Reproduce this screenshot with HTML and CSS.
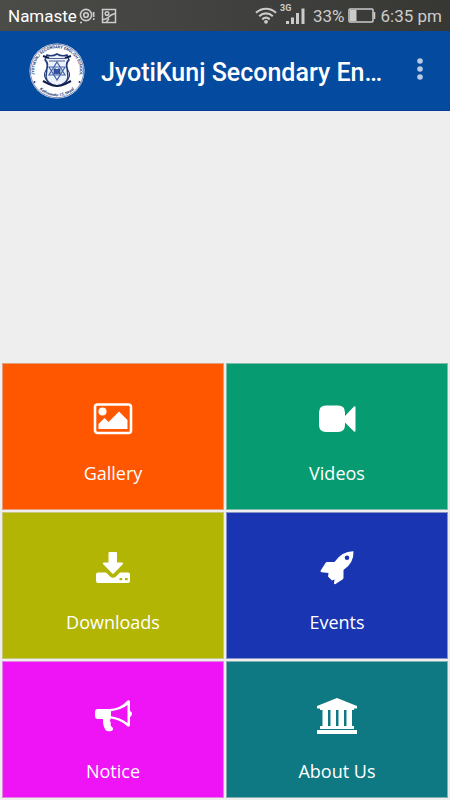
FILE: index.html
```html
<!DOCTYPE html>
<html lang="en">
<head>
<meta charset="utf-8">
<meta name="viewport" content="width=device-width, initial-scale=1">
<title>JyotiKunj Secondary English School</title>
<link rel="stylesheet" href="styles.css">
</head>
<body>
<div class="status">
  <div class="status-group left">
    <span>Namaste</span>
    <svg width="16" height="16" viewBox="0 0 16 16" fill="none" stroke="#ccc" stroke-width="1.6"><circle cx="7" cy="7" r="5.6"/><circle cx="7" cy="7" r="2.3"/><path d="M1 14.5h2M14.7 4v5M14.7 10.2v1.8"/></svg>
    <svg class="shot" width="16" height="16" viewBox="0 0 16 16" fill="none" stroke="#ccc" stroke-width="1.5"><rect x="1.5" y="1.5" width="13" height="13"/><circle cx="6" cy="5.5" r="1.8"/><path d="M2 11.500c3 0 4-1 5-2s3-3 7-4M5.500 14l2.500-3.500"/></svg>
  </div>
  <div class="status-group">
    <svg width="22" height="17" viewBox="0 0 22 17" fill="none" stroke="#ccc" stroke-width="2.2"><path d="M1 5.8c6-5.4 14-5.4 20 0M4.2 9.2c4-3.7 9.600-3.7 13.600 0M7.300 12.400c2.200-2 5.200-2 7.400 0"/><circle cx="11" cy="14.800" r="1.900" fill="#ccc" stroke="none"/></svg>
    <svg class="signal" width="26" height="21" viewBox="0 0 26 21" fill="#ccc"><text class="network" x="0" y="8">3G</text><path d="M6 18h3v3H6zM11 14.500h3V21h-3zM16 10h3v11h-3zM21.500 5.500h3V21h-3z"/></svg>
    <span class="dim percent">33%</span>
    <svg width="28" height="15" viewBox="0 0 28 15" fill="none" stroke="#ccc" stroke-width="1.500"><rect x="1" y="1" width="24" height="13" rx="1"/><path d="M2 2h6.500v11H2z" fill="#ccc" stroke="none"/><path d="M26.500 4v7"/></svg>
    <span class="dim clock">6:35 pm</span>
  </div>
</div>
<header class="bar">
  <svg class="logo" viewBox="0 0 56 56" role="img" aria-label="School emblem">
    <defs><path id="ring-top" d="M7.500 38A22.800 22.800 0 1 1 48.500 38"/><path id="ring-bottom" d="M7 42A25.200 25.200 0 0 0 49 42"/></defs>
    <circle cx="28" cy="28" r="27.500" fill="#fff"/>
    <circle cx="28" cy="28" r="26.700" fill="none" stroke="#20397a" stroke-width=".6"/>
    <text class="ring"><textPath href="#ring-top" startOffset="50%" text-anchor="middle">JYOTIKUNJ SECONDARY ENGLISH SCHOOL</textPath></text>
    <text class="ring script"><textPath href="#ring-bottom" startOffset="50%" text-anchor="middle">Kathmandu-15, Nepal</textPath></text>
    <g fill="none" stroke="#233a78">
      <path d="M18 12q5 2 10-1 5 3 10 1l2 5q-3 3-2 8l1 9q-1 7-11 9-10-2-11-9l1-9q1-5-2-8z" fill="#edf2fb" stroke-width="1.500"/>
      <path d="M20 15.500h16M20 18h16" stroke-width=".8"/>
      <path d="M16 16q5 5 1 11t2 12M40 16q-5 5-1 11t-2 12" stroke-width="1"/>
      <path d="M28 19l8 13H20zM28 37l-8-13h16z" stroke="#4263ad" stroke-width="1.200"/>
      <path d="M14 13l6 2M42 13l-6 2M14 38l6 3q8 4 16 0l6-3" stroke="#111e4b" stroke-width="2"/>
      <path d="M25 26q2-1 3 1 1-2 3-1v5q-2-1-3 0-1-1-3 0z" fill="#3152a4" stroke-width=".7"/>
    </g>
    <circle cx="5.500" cy="39" r="1" fill="#20397a"/><circle cx="50.500" cy="39" r="1" fill="#20397a"/>
  </svg>
  <h1 class="title">JyotiKunj Secondary English School</h1>
  <button class="more" type="button" aria-label="More options"><svg width="6" height="22" viewBox="0 0 6 22" fill="#b9cbe3"><circle cx="3" cy="3" r="2.800"/><circle cx="3" cy="11" r="2.800"/><circle cx="3" cy="19" r="2.800"/></svg></button>
</header>
<div class="banner"></div>
<nav class="tiles">
  <a class="tile gallery" href="#gallery">
    <svg class="icon" viewBox="0 0 40 40"><rect x="2" y="5.500" width="36" height="28.500" rx="2.500" fill="none" stroke="#fff" stroke-width="2.600"/><circle cx="9.500" cy="12.500" r="4" fill="#fff"/><path d="M5.500 30v-5l6-6 4 4L26 12.500l8.500 8.500v9z" fill="#fff"/></svg>
    <span>Gallery</span>
  </a>
  <a class="tile videos" href="#videos">
    <svg class="icon" viewBox="0 0 40 40" fill="#fff"><path d="M9 6.500h12q7 0 7 7v3.500L37 7.500q1.500-1 1.500 1v23q0 2-1.500 1L28 23.500V26q0 7-7 7H9q-7 0-7-7V13.500q0-7 7-7z"/></svg>
    <span>Videos</span>
  </a>
  <a class="tile downloads" href="#downloads">
    <svg class="icon" viewBox="0 0 40 40" fill="#fff"><path d="M16.500 4h6.500q1 0 1 1v9.500h5q2 0 .7 1.800l-8.700 9q-1 1-2 0l-8.700-9Q9 14.500 11 14.500h4.500V5q0-1 1-1z"/><path fill-rule="evenodd" d="M5 24.500h8l4 4q3 2.500 6 0l4-4h8q2 0 2 2V33q0 2-2 2H5q-2 0-2-2v-6.500q0-2 2-2zM26.500 30v2.200h2.700V30zM32 30v2.200h2.700V30z"/></svg>
    <span>Downloads</span>
  </a>
  <a class="tile events" href="#events">
    <svg class="icon" viewBox="0 0 40 40" fill="#fff"><path fill-rule="evenodd" d="M36.500 3.200Q25 3 17.500 14H10q-1 0-1.500 1L3.700 22.500q-.7 1.500 1 1.700l6.800.8-.5 3.500 4 4 2.500-1-.5 4q.4 1 1.500.5l7-4.500q1-.6 1-2v-7.500Q37 15 36.500 3.200zM30 7.500a2.300 2.300 0 1 1 0 4.600 2.300 2.300 0 0 1 0-4.600z"/></svg>
    <span>Events</span>
  </a>
  <a class="tile notice" href="#notice">
    <svg class="icon" viewBox="0 0 40 40" fill="#fff"><path fill-rule="evenodd" d="M5 12h12Q28 11 34 4q2-1.500 3 .5V14q2 .5 2 2.800T37 20v8.500q-1 2-3 .5-6-6-16-7.500-2 2 0 4.500-1.500 2 1.500 4.500 1.500 2-1 3.500-4 1-6-1-3-5-2.500-11H5q-3 0-3-3v-4q0-3 3-3zM34.500 8Q28 13 18 14.200v5Q27 20.500 34.500 26z"/></svg>
    <span>Notice</span>
  </a>
  <a class="tile about" href="#about">
    <svg class="icon" viewBox="0 0 40 40" fill="#fff"><path d="M20 1l20 8v2.500h-3V13H3v-1.500H0V9zM5.500 13H11v16H5.500zM13.500 13H19v16h-5.500zM21.500 13H27v16h-5.500zM29.500 13H35v16h-5.500zM3 29h34v3H3zM0 33h40v4H0z"/></svg>
    <span>About Us</span>
  </a>
</nav>
</body>
</html>
```

FILE: styles.css
```css
* { box-sizing: border-box; }
body {
  margin: 0;
  min-height: 100vh;
  display: flex;
  flex-direction: column;
  background: #eee;
  font-family: "Open Sans", "Noto Sans", sans-serif;
}
.status {
  height: 31px;
  padding: 0 8px;
  display: flex;
  align-items: center;
  justify-content: space-between;
  background: linear-gradient(90deg, #4b4c48, #41423f 50%, #373734);
  color: #fff;
  font: 17px/24px Roboto, sans-serif;
}
.status-group { display: flex; align-items: center; gap: 3px; }
.left { gap: 2px; }
.shot { margin-left: 4px; }
.signal { margin-bottom: 4px; }
.network { font: bold 9px Roboto, sans-serif; }
.dim { color: #ccc; }
.percent { margin-left: 4px; }
.clock { margin-left: 2px; }
.bar {
  height: 80px;
  padding: 0 8px 0 29px;
  display: flex;
  align-items: center;
  background: #044a9f;
  border-bottom: 1px solid #0a3c98;
}
.logo { width: 56px; height: 56px; flex: none; }
.ring { font: bold 4px Roboto, sans-serif; fill: #20397a; }
.script { font-style: italic; }
.title {
  flex: 1;
  min-width: 0;
  margin: 0 12px 0 16px;
  padding-top: 4px;
  overflow: hidden;
  white-space: nowrap;
  text-overflow: ellipsis;
  color: #fff;
  font: 500 25px/32px Roboto, sans-serif;
}
.more {
  width: 44px;
  height: 48px;
  padding: 0 0 4px;
  border: 0;
  background: none;
  display: flex;
  align-items: center;
  justify-content: center;
}
.banner { height: 252px; }
.tiles {
  flex: 1;
  padding: 0 2px 2px;
  display: grid;
  grid-template-columns: 1fr 1fr;
  grid-template-rows: 147px 147px minmax(137px, 1fr);
  gap: 2px;
}
.tile {
  padding-top: 35px;
  display: flex;
  flex-direction: column;
  align-items: center;
  gap: 22px;
  border: 1px solid rgba(210, 210, 210, .6);
  color: #fff;
  font-size: 18px;
  line-height: 24px;
  text-decoration: none;
}
.icon { width: 40px; height: 40px; }
.gallery { background: #ff5600; }
.videos { background: #069b70; }
.downloads { background: #b3b505; }
.events { background: #1a35b2; }
.notice { background: #ef14f5; }
.about { background: #0e7982; }
```
